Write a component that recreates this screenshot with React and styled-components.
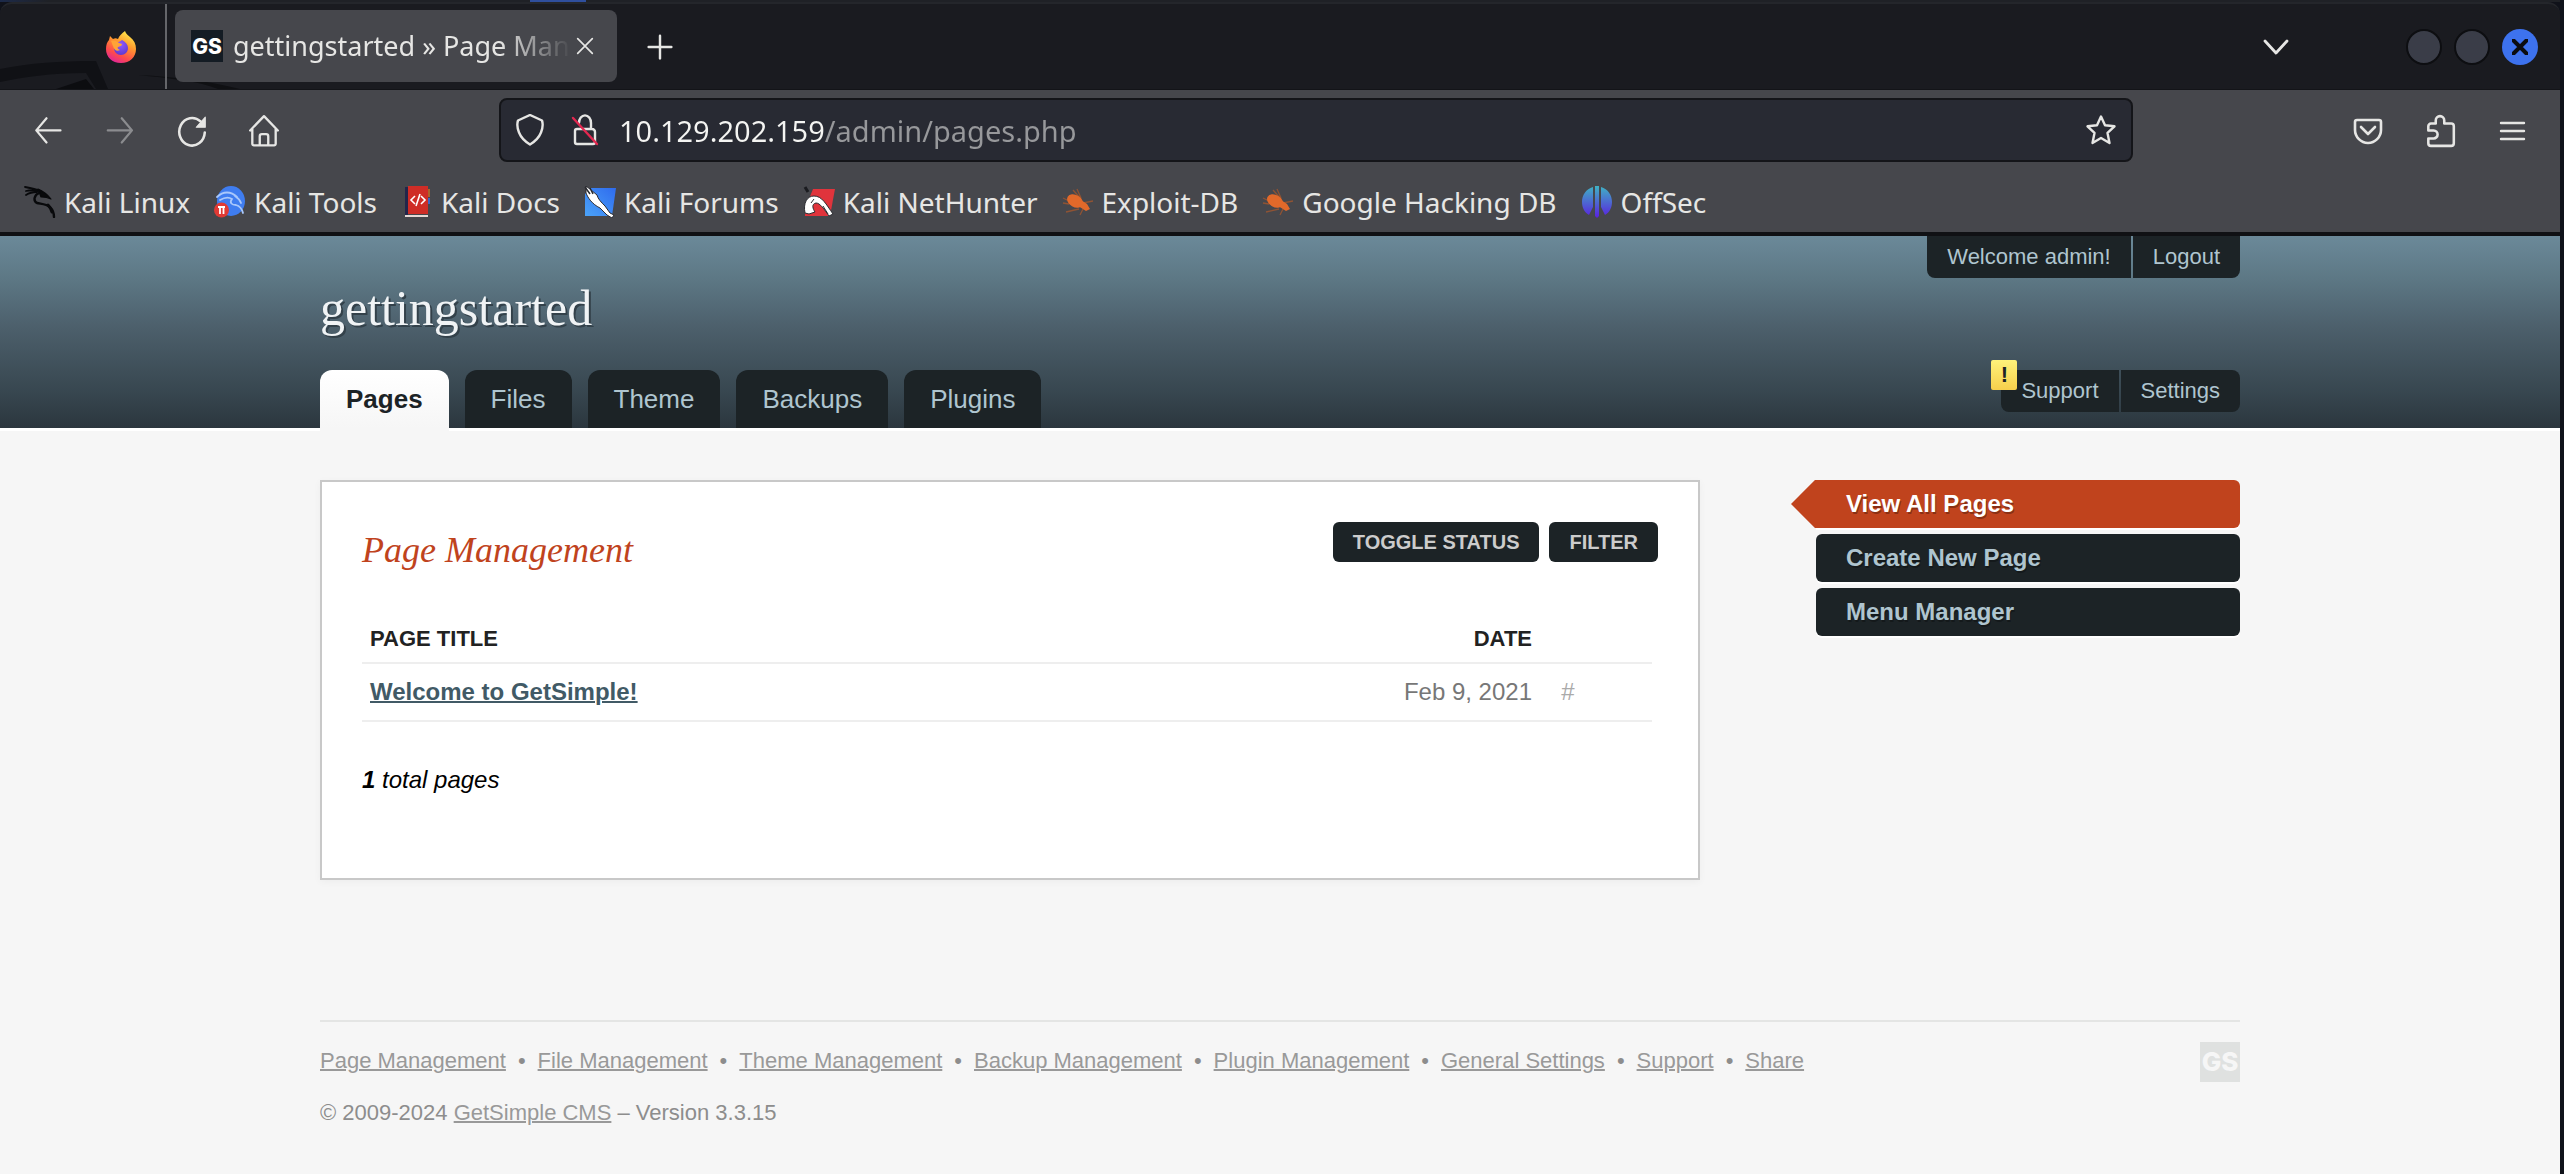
import React from 'react';
import styled, { createGlobalStyle } from 'styled-components';

const c = {
  frame: '#10121a',
  tabbar: '#1a1b20',
  toolbar: '#46474c',
  field: '#282a33',
  chromeText: '#e6e6e4',
  ink: '#1c2326',
  mist: '#afc5cf',
  rust: '#c0431d',
  page: '#f6f6f6',
  grey: '#999999',
};
const sans = '"Liberation Sans", Arial, sans-serif';
const serif = '"Liberation Serif", "Times New Roman", serif';
const ui = '"Noto Sans", sans-serif';

const GlobalStyle = createGlobalStyle`
  *, *::before, *::after { box-sizing: border-box; }
  body { margin: 0; background: ${c.frame}; font-family: ${sans}; }
  h1, h2, p, ul { margin: 0; padding: 0; font-weight: normal; }
  ul { list-style: none; }
  button { border: 0; padding: 0; background: none; color: inherit; font: inherit; cursor: pointer; }
`;

/* ---------- browser window ---------- */

const Window = styled.div`
  display: flex;
  flex-direction: column;
  min-height: 100vh;
  padding-right: 4px;
  background: ${c.frame};
`;

const DesktopEdge = styled.div`
  height: 2px;
  background: linear-gradient(90deg, #1c2a4a 0, #1f2126 48px, #1f2126 530px, #2f4f9e 530px, #2f4f9e 586px, #1f2126 586px);
`;

const TabStrip = styled.div`
  position: relative;
  display: flex;
  height: 88px;
  background: ${c.tabbar};
  border-top: 2px solid #24262b;
  border-bottom: 1px solid #131418;
  border-radius: 12px 12px 0 0;
  color: ${c.chromeText};
  overflow: hidden;
`;

const StripArt = styled.svg`
  position: absolute;
  left: 0;
  bottom: 0;
`;

const PinnedArea = styled.div`
  position: relative;
  display: flex;
  align-items: center;
  justify-content: flex-end;
  width: 167px;
  padding-right: 28px;
  border-right: 2px solid #65666a;
`;

const Tab = styled.div`
  position: relative;
  display: flex;
  align-items: center;
  width: 442px;
  height: 72px;
  margin: 6px 0 0 8px;
  padding: 0 22px 0 16px;
  border-radius: 8px;
  background: ${c.toolbar};
`;

const TabTitle = styled.span`
  flex: 1;
  min-width: 0;
  margin-left: 10px;
  overflow: hidden;
  white-space: nowrap;
  font: 400 27px/44px ${ui};
  mask-image: linear-gradient(90deg, #000 78%, transparent 99%);
`;

const SiteMark = styled.span`
  display: grid;
  place-items: center;
  width: ${p => p.$size}px;
  height: ${p => p.$size}px;
  background: ${p => (p.$faded ? '#dfe1e0' : '#141c24')};
  color: ${p => (p.$faded ? c.page : '#ffffff')};
  font: 800 ${p => (p.$faded ? 26 : 21)}px/1 Inter, ${sans};
`;

const Spacer = styled.div`
  flex: 1;
`;

const IconButton = styled.button`
  display: grid;
  place-items: center;
  flex: none;
  width: ${p => p.$w || 72}px;
  height: ${p => p.$h || 66}px;
  color: ${p => (p.$dim ? '#8b8c8f' : c.chromeText)};
`;

const StripActions = styled.div`
  position: relative;
  display: flex;
  align-items: center;
`;

const WindowControls = styled.div`
  display: flex;
  align-items: center;
  gap: 12px;
  margin-left: 94px;
  padding-right: 22px;
`;

const WindowButton = styled.button`
  display: grid;
  place-items: center;
  width: 36px;
  height: 36px;
  border-radius: 50%;
  border: ${p => (p.$close ? 0 : '2px solid #0d0e11')};
  background: ${p => (p.$close ? '#3d72ee' : '#3a3d48')};
  color: #0b0c10;
`;

const Toolbar = styled.div`
  display: flex;
  align-items: flex-start;
  height: 82px;
  padding: 8px 12px 0;
  background: ${c.toolbar};
`;

const AddressBar = styled.div`
  display: flex;
  align-items: center;
  flex: 0 1 1634px;
  height: 64px;
  padding: 0 14px 0 8px;
  border: 2px solid #141519;
  border-radius: 8px;
  background: ${c.field};
  color: ${c.chromeText};
`;

const AddressInput = styled.input`
  flex: 1;
  min-width: 0;
  height: 56px;
  margin: 0;
  padding: 0;
  border: 0;
  outline: 0;
  font: 400 29px/40px ${ui};
  color: transparent;
  background: linear-gradient(90deg, #f4f4f2 206px, #97989b 206px);
  background-clip: text;
`;

const Bookmarks = styled.nav`
  display: flex;
  align-items: center;
  gap: 24px;
  height: 64px;
  padding: 0 24px;
  border-bottom: 4px solid #101114;
  background: ${c.toolbar};
`;

const Bookmark = styled.a`
  display: flex;
  align-items: center;
  gap: 8px;
  color: ${c.chromeText};
  font: 400 28px/40px ${ui};
  white-space: nowrap;
  text-decoration: none;
`;

/* ---------- web page ---------- */

const Page = styled.div`
  flex: 1;
  background: ${c.page};
`;

const Wrapper = styled.div`
  width: 100%;
  max-width: 1920px;
  margin: 0 auto;
`;

const Header = styled.header`
  background: linear-gradient(#6b8999 0%, #5d7885 22%, #4c5f6b 48%, #37464f 82%, #2b363e 100%);
  border-bottom: 3px solid #ffffff;
`;

const HeaderTop = styled.div`
  display: flex;
  justify-content: space-between;
  align-items: flex-start;
  height: 134px;
`;

const SiteName = styled.h1`
  padding-top: 42px;
  font: 400 50px/60px ${serif};
  color: #f0f3f5;
  text-shadow: 2px 2px 0 #33414a;
`;

const HeaderBottom = styled.div`
  display: flex;
  justify-content: space-between;
  align-items: flex-start;
`;

const PillGroup = styled.div`
  position: relative;
  display: flex;
  gap: 2px;
`;

const Pill = styled.a`
  padding: 0 20px;
  background: ${c.ink};
  color: ${c.mist};
  font: 400 22px/42px ${sans};
  text-decoration: none;
  &:first-of-type { border-radius: ${p => (p.$hanging ? 0 : 8)}px 0 0 8px; }
  &:last-of-type { border-radius: 0 ${p => (p.$hanging ? 0 : 8)}px 8px 0; }
`;

const Alert = styled.b`
  position: absolute;
  left: -10px;
  top: -10px;
  width: 26px;
  height: 30px;
  border-radius: 2px;
  background: linear-gradient(#fff27a, #f6cf4c);
  color: ${c.ink};
  font: 700 22px/30px ${sans};
  text-align: center;
`;

const MainTabs = styled.nav`
  display: flex;
  gap: 16px;
`;

const MainTab = styled.a`
  padding: 0 26px;
  border-radius: 12px 12px 0 0;
  background: ${p => (p.$active ? 'linear-gradient(#ffffff, #f6f6f6)' : c.ink)};
  color: ${p => (p.$active ? c.ink : c.mist)};
  font: ${p => (p.$active ? 700 : 400)} 26px/58px ${sans};
  text-decoration: none;
  box-shadow: ${p => (p.$active ? '0 3px 0 #f6f6f6' : 'none')};
`;

const Columns = styled(Wrapper)`
  display: flex;
  justify-content: space-between;
  align-items: flex-start;
  padding-top: 49px;
`;

const Panel = styled.main`
  flex: 0 1 1380px;
  padding: 40px 40px 84px;
  border: 2px solid #c8c8c8;
  background: #ffffff;
  box-shadow: 0 2px 8px rgba(0, 0, 0, 0.04);
`;

const PanelHead = styled.div`
  display: flex;
  justify-content: space-between;
  align-items: flex-start;
  height: 93px;
`;

const PanelTitle = styled.h2`
  padding-top: 8px;
  font: italic 400 36px/40px ${serif};
  color: ${c.rust};
`;

const Actions = styled.div`
  display: flex;
  gap: 10px;
`;

const ActionButton = styled.button`
  padding: 0 20px;
  border-radius: 6px;
  background: ${c.ink};
  color: #cccccc;
  font: 700 20px/40px ${sans};
  text-transform: uppercase;
`;

const PageTable = styled.table`
  width: calc(100% - 6px);
  border-collapse: collapse;
  th, td { padding: 0 8px; border-bottom: 2px solid #eeeeee; text-align: left; }
`;

const HeadCell = styled.th`
  width: ${p => p.$w || 'auto'};
  height: 48px;
  && { text-align: ${p => p.$align || 'left'}; }
  font: 700 22px/28px ${sans};
  color: #222222;
  text-transform: uppercase;
`;

const Cell = styled.td`
  height: 58px;
  && { text-align: ${p => p.$align || 'left'}; }
  font: 400 24px/28px ${sans};
  color: #777777;
`;

const PageLink = styled.a`
  font-weight: 700;
  color: #415a66;
  text-decoration-thickness: 2px;
`;

const HashLink = styled.a`
  color: #aaaaaa;
  text-decoration: none;
`;

const Total = styled.p`
  margin-top: 44px;
  font: italic 400 24px/28px ${sans};
  color: #000000;
`;

const SideNav = styled.nav`
  display: flex;
  flex-direction: column;
  gap: 6px;
  width: 424px;
`;

const SideLink = styled.a`
  position: relative;
  padding: 0 30px;
  border-radius: ${p => (p.$active ? '0 6px 6px 0' : '6px')};
  background: ${p => (p.$active ? c.rust : c.ink)};
  color: ${p => (p.$active ? '#ffffff' : c.mist)};
  font: 700 24px/48px ${sans};
  text-decoration: none;
  text-shadow: 1px 2px 0 rgba(0, 0, 0, 0.3);
  box-shadow: 0 2px 0 #ffffff;
  &::before {
    content: '';
    display: ${p => (p.$active ? 'block' : 'none')};
    position: absolute;
    left: -25px;
    top: 0;
    width: 26px;
    height: 48px;
    background: ${c.rust};
    clip-path: polygon(100% 0, 92% 0, 0 50%, 92% 100%, 100% 100%);
  }
`;

const Footer = styled.footer`
  display: flex;
  justify-content: space-between;
  align-items: flex-start;
  width: 100%;
  max-width: 1920px;
  margin: 140px auto 0;
  padding: 20px 0 40px;
  border-top: 2px solid #e4e5e4;
  color: #8d8d8d;
  font: 400 22px/30px ${sans};
  a { color: ${c.grey}; text-decoration-thickness: 2px; }
`;

const FooterText = styled.div`
  display: flex;
  flex-direction: column;
  gap: 22px;
  padding-top: 4px;
`;

const FooterLinks = styled.ul`
  display: flex;
  gap: 12px;
  li { display: flex; gap: 12px; }
  li + li::before { content: '•'; }
`;

/* ---------- icons ---------- */

const Line = ({ size = 32, w = 2, children, ...rest }) => (
  <svg width={size} height={size} viewBox="0 0 32 32" fill="none" stroke="currentColor" strokeWidth={w} strokeLinecap="round" strokeLinejoin="round" aria-hidden="true" {...rest}>
    {children}
  </svg>
);

const FirefoxIcon = () => (
  <svg width="32" height="32" viewBox="0 0 32 32" aria-hidden="true">
    <defs>
      <linearGradient id="ffFlame" x1="0.8" y1="0" x2="0.3" y2="1">
        <stop offset="0" stopColor="#fff44f" />
        <stop offset="0.4" stopColor="#ff9a2e" />
        <stop offset="0.75" stopColor="#ff4b4b" />
        <stop offset="1" stopColor="#e0249a" />
      </linearGradient>
      <radialGradient id="ffGlobe" cx="0.5" cy="0.3" r="0.8">
        <stop offset="0" stopColor="#9059ff" />
        <stop offset="1" stopColor="#5b35c8" />
      </radialGradient>
    </defs>
    <path d="M20 0c1 3 3 4 5 6 4 3 6 7 6 12 0 8-6 14-15 14S1 26 1 18c0-4 1-7 3-9l1-4 3 3c2-1 3-1 5 0 1-3 4-6 7-8z" fill="url(#ffFlame)" />
    <path d="M10 13c2-2 5-2 7-4 4 2 6 5 6 8 0 4-3 7-7 7s-7-3-7-7c0-2 0-3 1-4z" fill="url(#ffGlobe)" />
    <path d="M6 10c3-1 6 0 8 2l3 1c0 2-2 2-4 3-1 1 0 2 2 3-3 2-6 0-7-4-1-2-1-3-2-5z" fill="#ffa436" />
  </svg>
);

const BackIcon = () => <Line w={2.4}><path d="M29 16H3M14 3L3 16l11 13" transform="translate(1.500 0.500) scale(0.93)" /></Line>;
const ForwardIcon = () => <Line w={2.4}><path d="M3 16h26M18 3l11 13-11 13" transform="translate(1 0.500) scale(0.93)" /></Line>;
const ReloadIcon = () => (
  <Line size={34}>
    <path d="M28 17.500a12 13 0 1 1-4-10.500" strokeWidth="2.400" />
    <path d="M28.500 3v9.500H20z" fill="currentColor" strokeWidth="1" />
  </Line>
);
const HomeIcon = () => (
  <Line size={34}>
    <path d="M3 15.500L16 2l13 13.500M5 14v14a1.500 1.500 0 0 0 1.500 1.500h19A1.500 1.500 0 0 0 27 28V14M12 29.500V21a2 2 0 0 1 2-2h4a2 2 0 0 1 2 2v8.500" strokeWidth="2.200" />
  </Line>
);
const ShieldIcon = () => <Line w={2.4}><path d="M16 1l12 5.500c1 3 1 7-1 12-2 5-6 9-11 12-5-3-9-7-11-12-2-5-2-9-1-12z" /></Line>;
const LockIcon = () => (
  <Line w={2.4}>
    <path d="M10 9a5.500 7 0 0 1 12 0v6M9 15h14a3 3 0 0 1 3 3v10a2 2 0 0 1-2 2H8a2 2 0 0 1-2-2V17a2 2 0 0 1 2-2z" />
    <path d="M4 4l24 26" stroke="#e22850" />
  </Line>
);
const StarIcon = () => <Line><path d="M16 2.500l4 8.800 9.500 1-7 6.600 2 10.100-8.500-5-8.500 5 2-10.100-7-6.600 9.500-1z" strokeWidth="2.400" /></Line>;
const PocketIcon = () => (
  <Line w={2.6}>
    <path d="M5 5h22a2 2 0 0 1 2 2v8c0 7-6 13-13 13S3 22 3 15V7a2 2 0 0 1 2-2z" />
    <path d="M9 12l7 7 7-7" />
  </Line>
);
const PuzzleIcon = () => (
  <Line w={2.4} size={34}>
    <path d="M12 9V6a4 4 0 0 1 8 0v3h6.500A2.500 2.500 0 0 1 29 11.500v16a2.500 2.500 0 0 1-2.500 2.500h-19A2.500 2.500 0 0 1 5 27.500V23h5a3.500 3.500 0 0 0 0-7.500H5v-4A2.500 2.500 0 0 1 7.500 9z" />
  </Line>
);
const MenuIcon = () => <Line w={2.4}><path d="M5 8h23M5 16h23M5 24h23" /></Line>;
const ChevronIcon = () => <Line w={2.8}><path d="M5 10l11 12 11-12" /></Line>;
const CrossIcon = ({ size = 20, w = 3 }) => <Line size={size} w={w}><path d="M3 3l26 26M29 3L3 29" /></Line>;
const PlusIcon = () => <Line size={26} w={3}><path d="M16 2v28M2 16h28" /></Line>;

const DragonIcon = () => (
  <svg width="32" height="32" viewBox="0 0 32 32" fill="none" stroke="#08090b" strokeLinecap="round" strokeLinejoin="round" aria-hidden="true">
    <path d="M1 1c6 1 11 2 15 4M2 5c4-1 8-1 12 0M2 9c3-2 7-3 11-3" strokeWidth="1.800" />
    <path d="M14 3c5 2 9 5 13 10-4-2-7-2-10-2z" fill="#08090b" strokeWidth="1.200" />
    <path d="M15 7c-5 2-6 8-2 10 4 1 9 1 13 4 3 3 4 6 4 10" strokeWidth="2.400" />
    <path d="M24 19c2 2 3 4 4 7" strokeWidth="3" />
  </svg>
);
const ToolsIcon = () => (
  <svg width="32" height="32" viewBox="0 0 32 32" aria-hidden="true">
    <ellipse cx="17" cy="15" rx="14" ry="15" fill="#3f7df0" />
    <path d="M3 11c6-6 14-6 20 0M6 14c5-3 9-3 12-1-3 4 0 6 4 6 4 1 6 4 7 8M21 10c3 2 5 4 6 7" fill="none" stroke="#a9c8fb" strokeWidth="1.800" strokeLinecap="round" />
    <circle cx="7.500" cy="24" r="7.500" fill="#e03a35" />
    <path d="M4 21h7M6 21v7M9.500 21v7" stroke="#ffffff" strokeWidth="1.800" />
  </svg>
);
const DocsIcon = () => (
  <svg width="32" height="32" viewBox="0 0 32 32" aria-hidden="true">
    <path d="M4 1h3v28H4z" fill="#23264a" />
    <path d="M7 0h20v28H7z" fill="#cf2d26" />
    <path d="M27 3h2v8h-2z" fill="#a8652d" />
    <path d="M27 12h2v6h-2z" fill="#3a66c4" />
    <path d="M4 29h23v2H4z" fill="#e6d9d5" />
    <path d="M14 10l-4 4 4 4M20 10l4 4-4 4M19 8l-4 12" fill="none" stroke="#ffffff" strokeWidth="1.600" />
  </svg>
);
const ForumsIcon = () => (
  <svg width="32" height="32" viewBox="0 0 32 32" aria-hidden="true">
    <defs>
      <linearGradient id="kf" x1="1" y1="0" x2="0" y2="1">
        <stop offset="0" stopColor="#2f6bee" />
        <stop offset="1" stopColor="#4ba3f8" />
      </linearGradient>
    </defs>
    <path d="M6 2h26l-4 28H1V8z" fill="url(#kf)" />
    <path d="M2 0l5 4 6 5c1 4 4 7 8 11l5 7 4 2-2 3-5-3-7-7C8 18 4 12 2 7z" fill="#ffffff" stroke="#2a2b30" strokeWidth="1" />
    <path d="M1 1l5 7M6 2l3 6" stroke="#2a2b30" strokeWidth="1.500" />
  </svg>
);
const NetHunterIcon = () => (
  <svg width="32" height="32" viewBox="0 0 32 32" aria-hidden="true">
    <path d="M10 3h22l-5 27H2v-7z" fill="#e0343c" />
    <path d="M2 27C0 17 4 10 11 10c8 0 12 8 19 18l-4 2c-5-7-9-13-13-13-5 1-3 6-1 9l-6 2z" fill="#ffffff" stroke="#2a2b30" strokeWidth="1" />
    <path d="M8 17l3-4M20 20l5 8" stroke="#2a2b30" strokeWidth="1" />
    <path d="M2 1l3 5" stroke="#1b1c20" strokeWidth="3" />
  </svg>
);
const BugIcon = () => (
  <svg width="32" height="32" viewBox="0 0 32 32" aria-hidden="true">
    <path d="M11 4l8 9M1 12l8 4M31 15l-10 2M4 26l13-3M18 29l3-6M15 3l4 9M1 17l6 1" stroke="#8f5334" strokeWidth="1.300" />
    <ellipse cx="13" cy="15" rx="8.500" ry="6" transform="rotate(30 13 15)" fill="#e2692a" />
    <path d="M13 18l11 7 4-2-3-5-6-4z" fill="#e2692a" />
  </svg>
);
const OffSecIcon = () => (
  <svg width="32" height="32" viewBox="0 0 32 32" aria-hidden="true">
    <defs>
      <linearGradient id="os" gradientUnits="userSpaceOnUse" x1="0" y1="0" x2="0" y2="32">
        <stop offset="0" stopColor="#3fb3c4" />
        <stop offset="1" stopColor="#5a1fe0" />
      </linearGradient>
    </defs>
    <path d="M12 1v20l-4 8C3 26 1 21 1 16 1 9 5 3 12 1zM14 0h4v30l-2 2-2-2zM20 1c7 2 11 8 11 15 0 5-2 10-7 13l-4-8z" fill="url(#os)" />
  </svg>
);

/* ---------- content ---------- */

const bookmarks = [
  ['Kali Linux', DragonIcon],
  ['Kali Tools', ToolsIcon],
  ['Kali Docs', DocsIcon],
  ['Kali Forums', ForumsIcon],
  ['Kali NetHunter', NetHunterIcon],
  ['Exploit-DB', BugIcon],
  ['Google Hacking DB', BugIcon],
  ['OffSec', OffSecIcon],
];
const mainTabs = ['Pages', 'Files', 'Theme', 'Backups', 'Plugins'];
const sideLinks = ['View All Pages', 'Create New Page', 'Menu Manager'];
const footerLinks = ['Page Management', 'File Management', 'Theme Management', 'Backup Management', 'Plugin Management', 'General Settings', 'Support', 'Share'];

const BrowserChrome = () => (
  <>
    <DesktopEdge />
    <TabStrip>
      <StripArt width="260" height="34" viewBox="0 0 260 34" aria-hidden="true">
        <path d="M0 14C30 8 60 6 96 6l12 28H96L86 18C50 18 24 22 0 27z" fill="#101115" />
        <path d="M56 34l30-10 8 10z" fill="#0c0d10" />
        <path d="M138 20c40 2 70 6 102 14h-22c-20-8-50-11-80-14z" fill="#0f1013" />
      </StripArt>
      <PinnedArea>
        <IconButton $w={32} $h={80} aria-label="Firefox View"><FirefoxIcon /></IconButton>
      </PinnedArea>
      <Tab>
        <SiteMark $size={32}>GS</SiteMark>
        <TabTitle>gettingstarted » Page Management</TabTitle>
        <IconButton $w={20} $h={40} aria-label="Close tab"><CrossIcon size={18} /></IconButton>
      </Tab>
      <IconButton $w={86} $h={86} aria-label="New tab"><PlusIcon /></IconButton>
      <Spacer />
      <StripActions>
        <IconButton aria-label="List all tabs"><ChevronIcon /></IconButton>
        <WindowControls>
          <WindowButton aria-label="Minimize" />
          <WindowButton aria-label="Maximize" />
          <WindowButton $close aria-label="Close"><CrossIcon size={16} w={8} /></WindowButton>
        </WindowControls>
      </StripActions>
    </TabStrip>
    <Toolbar>
      <IconButton aria-label="Back"><BackIcon /></IconButton>
      <IconButton $dim aria-label="Forward"><ForwardIcon /></IconButton>
      <IconButton aria-label="Reload"><ReloadIcon /></IconButton>
      <IconButton aria-label="Home"><HomeIcon /></IconButton>
      <Spacer />
      <AddressBar>
        <IconButton $w={42} $h={56} aria-label="Tracking protection"><ShieldIcon /></IconButton>
        <IconButton $w={68} $h={56} aria-label="Connection not secure"><LockIcon /></IconButton>
        <AddressInput aria-label="Address" defaultValue="10.129.202.159/admin/pages.php" spellCheck={false} />
        <IconButton $w={32} $h={56} aria-label="Bookmark this page"><StarIcon /></IconButton>
      </AddressBar>
      <Spacer />
      <IconButton aria-label="Save to Pocket"><PocketIcon /></IconButton>
      <IconButton aria-label="Extensions"><PuzzleIcon /></IconButton>
      <IconButton aria-label="Menu"><MenuIcon /></IconButton>
    </Toolbar>
    <Bookmarks aria-label="Bookmarks">
      {bookmarks.map(([name, Icon]) => (
        <Bookmark href="#" key={name}><Icon />{name}</Bookmark>
      ))}
    </Bookmarks>
  </>
);

const PageHeader = () => (
  <Header>
    <Wrapper>
      <HeaderTop>
        <SiteName>gettingstarted</SiteName>
        <PillGroup>
          <Pill href="#" $hanging>Welcome admin!</Pill>
          <Pill href="#" $hanging>Logout</Pill>
        </PillGroup>
      </HeaderTop>
      <HeaderBottom>
        <MainTabs aria-label="Sections">
          {mainTabs.map((name, i) => (
            <MainTab href="#" key={name} $active={i === 0}>{name}</MainTab>
          ))}
        </MainTabs>
        <PillGroup as="nav" aria-label="Site">
          <Pill href="#">Support</Pill>
          <Pill href="#">Settings</Pill>
          <Alert>!</Alert>
        </PillGroup>
      </HeaderBottom>
    </Wrapper>
  </Header>
);

export default function App() {
  return (
    <Window>
      <GlobalStyle />
      <BrowserChrome />
      <Page>
        <PageHeader />
        <Columns>
          <Panel>
            <PanelHead>
              <PanelTitle>Page Management</PanelTitle>
              <Actions>
                <ActionButton>Toggle Status</ActionButton>
                <ActionButton>Filter</ActionButton>
              </Actions>
            </PanelHead>
            <PageTable>
              <thead>
                <tr>
                  <HeadCell>Page Title</HeadCell>
                  <HeadCell $align="right" $w="200px">Date</HeadCell>
                  <HeadCell $w="56px" />
                  <HeadCell $w="56px" />
                </tr>
              </thead>
              <tbody>
                <tr>
                  <Cell><PageLink href="#">Welcome to GetSimple!</PageLink></Cell>
                  <Cell $align="right">Feb 9, 2021</Cell>
                  <Cell $align="center"><HashLink href="#">#</HashLink></Cell>
                  <Cell />
                </tr>
              </tbody>
            </PageTable>
            <Total><b>1</b> total pages</Total>
          </Panel>
          <SideNav aria-label="Pages">
            {sideLinks.map((name, i) => (
              <SideLink href="#" key={name} $active={i === 0}>{name}</SideLink>
            ))}
          </SideNav>
        </Columns>
        <Footer>
          <FooterText>
            <FooterLinks>
              {footerLinks.map(name => (
                <li key={name}><a href="#">{name}</a></li>
              ))}
            </FooterLinks>
            <p>© 2009-2024 <a href="#">GetSimple CMS</a> – Version 3.3.15</p>
          </FooterText>
          <SiteMark $size={40} $faded>GS</SiteMark>
        </Footer>
      </Page>
    </Window>
  );
}
